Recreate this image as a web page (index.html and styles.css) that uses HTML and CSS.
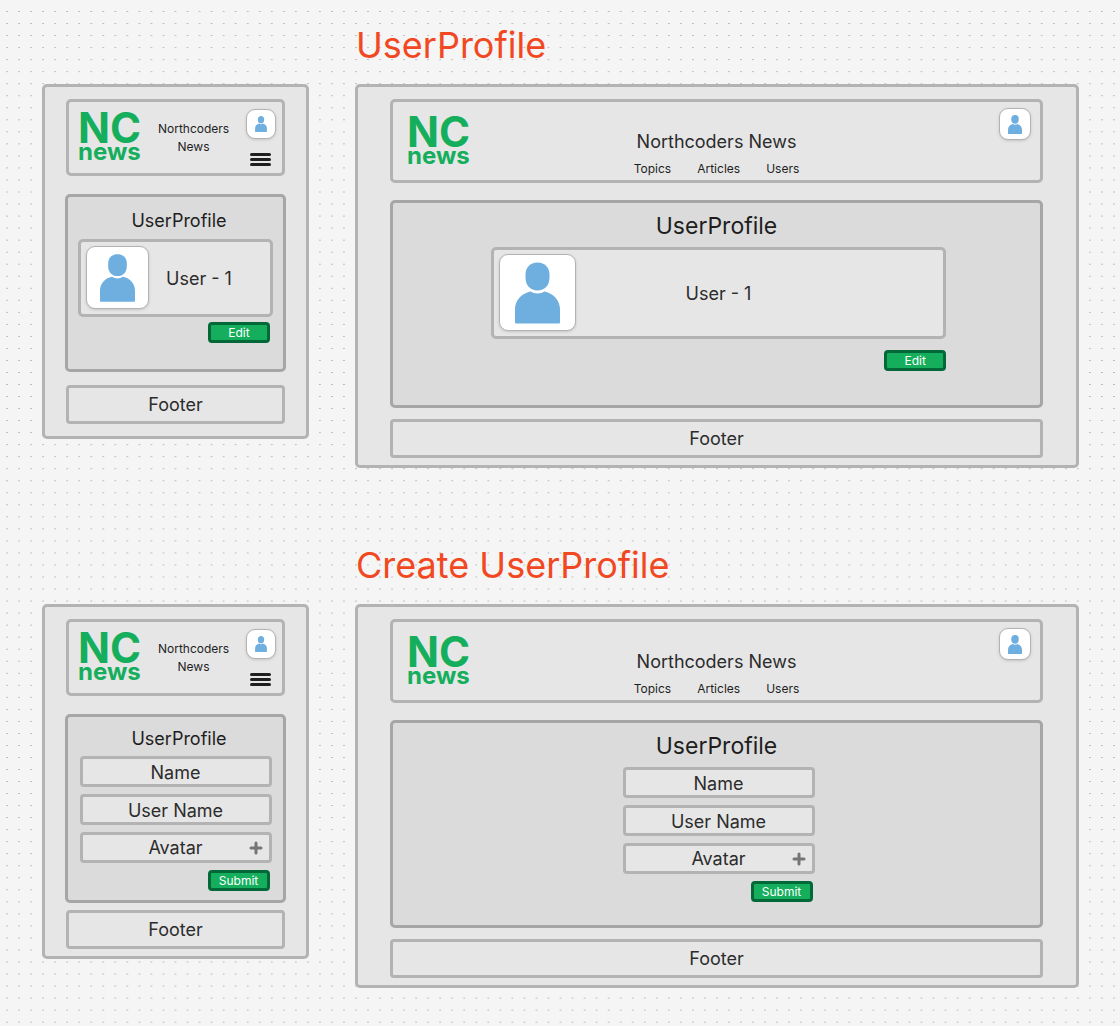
FILE: index.html
```html
<!DOCTYPE html>
<html lang="en">
<head>
<meta charset="utf-8">
<meta name="viewport" content="width=device-width, initial-scale=1">
<title>NC News wireframes</title>
<link rel="stylesheet" href="styles.css">
</head>
<body>
<svg class="defs" aria-hidden="true">
  <symbol id="person" viewBox="0 0 45 61">
    <path d="M22.500 0C30 0 34.500 5 34.500 12V15C34.500 23 29.500 28 22.500 28S10.500 23 10.500 15V12C10.500 5 15 0 22.500 0Z"/>
    <path d="M0 60V47C0 38 6 31 15.500 29Q18.500 31 22.500 31T29.500 29C39 31 45 38 45 47V60Q45 61 44 61H1Q0 61 0 60Z"/>
  </symbol>
</svg>

<main class="board">
  <section class="screens">
    <h2 class="screens-title">UserProfile</h2>

    <article class="frame mobile">
      <header class="bar">
        <div class="logo"><span class="logo-top">NC</span><span class="logo-bottom">news</span></div>
        <p class="site-name">Northcoders<br>News</p>
        <div class="actions">
          <span class="avatar"><svg aria-hidden="true"><use href="#person"/></svg></span>
          <button class="menu" type="button" aria-label="Menu"><span></span><span></span><span></span></button>
        </div>
      </header>
      <section class="panel view">
        <h3 class="panel-title">UserProfile</h3>
        <div class="panel-body">
          <div class="card">
            <span class="avatar large"><svg aria-hidden="true"><use href="#person"/></svg></span>
            <span class="user">User - 1</span>
          </div>
          <button class="action" type="button">Edit</button>
        </div>
      </section>
      <footer class="footer">Footer</footer>
    </article>

    <article class="frame desktop">
      <header class="bar">
        <div class="logo"><span class="logo-top">NC</span><span class="logo-bottom">news</span></div>
        <div class="masthead">
          <p class="site-name">Northcoders News</p>
          <nav class="nav"><a href="#topics">Topics</a><a href="#articles">Articles</a><a href="#users">Users</a></nav>
        </div>
        <span class="avatar"><svg aria-hidden="true"><use href="#person"/></svg></span>
      </header>
      <section class="panel view">
        <h3 class="panel-title">UserProfile</h3>
        <div class="panel-body">
          <div class="card">
            <span class="avatar large"><svg aria-hidden="true"><use href="#person"/></svg></span>
            <span class="user">User - 1</span>
          </div>
          <button class="action" type="button">Edit</button>
        </div>
      </section>
      <footer class="footer">Footer</footer>
    </article>
  </section>

  <section class="screens">
    <h2 class="screens-title">Create UserProfile</h2>

    <article class="frame mobile compact">
      <header class="bar">
        <div class="logo"><span class="logo-top">NC</span><span class="logo-bottom">news</span></div>
        <p class="site-name">Northcoders<br>News</p>
        <div class="actions">
          <span class="avatar"><svg aria-hidden="true"><use href="#person"/></svg></span>
          <button class="menu" type="button" aria-label="Menu"><span></span><span></span><span></span></button>
        </div>
      </header>
      <section class="panel create">
        <h3 class="panel-title">UserProfile</h3>
        <form class="panel-body form">
          <input class="field" type="text" placeholder="Name" aria-label="Name">
          <input class="field" type="text" placeholder="User Name" aria-label="User Name">
          <button class="field upload" type="button"><span>Avatar</span><svg viewBox="0 0 14 14" aria-hidden="true"><path d="M7 2V12M2 7H12"/></svg></button>
          <button class="action" type="submit">Submit</button>
        </form>
      </section>
      <footer class="footer">Footer</footer>
    </article>

    <article class="frame desktop">
      <header class="bar">
        <div class="logo"><span class="logo-top">NC</span><span class="logo-bottom">news</span></div>
        <div class="masthead">
          <p class="site-name">Northcoders News</p>
          <nav class="nav"><a href="#topics">Topics</a><a href="#articles">Articles</a><a href="#users">Users</a></nav>
        </div>
        <span class="avatar"><svg aria-hidden="true"><use href="#person"/></svg></span>
      </header>
      <section class="panel create">
        <h3 class="panel-title">UserProfile</h3>
        <form class="panel-body form">
          <input class="field" type="text" placeholder="Name" aria-label="Name">
          <input class="field" type="text" placeholder="User Name" aria-label="User Name">
          <button class="field upload" type="button"><span>Avatar</span><svg viewBox="0 0 14 14" aria-hidden="true"><path d="M7 2V12M2 7H12"/></svg></button>
          <button class="action" type="submit">Submit</button>
        </form>
      </section>
      <footer class="footer">Footer</footer>
    </article>
  </section>
</main>
</body>
</html>
```

FILE: styles.css
```css
* { box-sizing: border-box; }

/* dotted canvas */
body {
  margin: 0;
  font-family: Inter, "Liberation Sans", sans-serif;
  color: #2c2c2c;
  background-color: #f5f5f5;
  background-image: conic-gradient(from 90deg at calc(100% - 2px) calc(100% - 1px), #b8b8b8 90deg, transparent 0);
  background-size: calc(100vw / 93) calc(100vw / 93);
  background-position: 8px 12px;
}

h2, h3, p { margin: 0; font-weight: 400; }

button, input { font: inherit; color: inherit; margin: 0; }

.defs { display: none; }

.board {
  display: flex;
  flex-direction: column;
  gap: 72px;
  padding: 20px 41px 38px 42px;
}

.screens {
  display: grid;
  grid-template-columns: minmax(267px, 267fr) 724fr;
  column-gap: 46px;
  row-gap: 14px;
  align-items: start;
}

.screens-title {
  grid-column: 2;
  padding-left: 1px;
  font-size: 36px;
  line-height: 50px;
  color: #f24822;
}

.frame, .bar, .card, .footer, .field {
  border: 3px solid #b3b3b3;
  border-radius: 5px;
  background: #e6e6e6;
}

.frame { display: flex; flex-direction: column; }
.mobile { padding: 12px 21px; }
.compact { padding-bottom: 7px; }
.desktop { padding: 12px 33px 7px 32px; }

/* site header */
.mobile .bar {
  display: flex;
  align-items: center;
  min-height: 77px;
  padding: 0 6px 0 9px;
}

.desktop .bar {
  display: grid;
  grid-template-columns: 1fr auto 1fr;
  min-height: 84px;
  padding: 6px 9px 3px;
}

.logo {
  display: flex;
  flex-direction: column;
  padding-bottom: 5px;
  font-weight: 700;
  color: #14ae5c;
}
.desktop .logo { padding: 7px 0 0 5px; }
.logo-top { font-size: 42px; line-height: 34px; }
.logo-bottom { font-size: 24px; line-height: 14px; }

.mobile .site-name {
  flex: 1;
  text-align: center;
  font-size: 12px;
  line-height: 18px;
  color: #1e1e1e;
}

.masthead {
  display: flex;
  flex-direction: column;
  align-items: center;
  justify-content: flex-end;
  gap: 7px;
}
.desktop .site-name { font-size: 18px; line-height: 24px; }

.nav { display: flex; gap: 26px; font-size: 12px; line-height: 16px; }
.nav a { color: #1e1e1e; text-decoration: none; }

.actions {
  display: flex;
  flex-direction: column;
  align-items: center;
  gap: 14px;
}

.avatar {
  display: flex;
  justify-content: center;
  align-items: flex-start;
  width: 30px;
  height: 30px;
  padding-top: 6px;
  border: 1px solid #b3b3b3;
  border-radius: 9px;
  background: #fff;
  box-shadow: 0 1px 3px rgba(0, 0, 0, 0.15);
}
.avatar svg { width: 12px; height: 16px; fill: #6eafe0; }

.desktop .avatar { width: 32px; height: 32px; justify-self: end; }
.desktop .avatar svg { width: 14px; height: 19px; }

.avatar.large { flex: none; padding-top: 7px; }
.mobile .avatar.large { width: 63px; height: 63px; }
.mobile .avatar.large svg { width: 35px; height: 48px; }
.desktop .avatar.large { width: 77px; height: 77px; justify-self: start; }
.desktop .avatar.large svg { width: 45px; height: 62px; }

.menu {
  display: flex;
  flex-direction: column;
  gap: 2px;
  width: 21px;
  margin-right: 2px;
  padding: 0;
  border: 0;
  background: none;
}
.menu span { height: 3px; border-radius: 2px; background: #1e1e1e; }

/* main panel */
.panel {
  border: 3px solid #a6a6a6;
  border-radius: 5px;
  background: #dbdbdb;
  color: #1e1e1e;
}
.mobile .panel { margin: 18px -1px 0; }
.mobile .view { min-height: 178px; margin-bottom: 13px; padding: 12px 10px; }
.mobile .create { min-height: 189px; margin-bottom: 7px; padding: 10px 10px 7px; }
.desktop .panel { min-height: 208px; margin: 17px 0 11px; padding: 8px 0; }

.panel-title { text-align: center; }
.mobile .panel-title { padding-left: 7px; font-size: 18px; line-height: 24px; }
.desktop .panel-title { font-size: 23px; line-height: 30px; }

.panel-body {
  display: flex;
  flex-direction: column;
  align-items: flex-end;
  margin: 0 auto;
  color: #2c2c2c;
}
.mobile .panel-body { padding-top: 6px; gap: 5px; }
.desktop .panel-body { gap: 11px; width: 71%; padding: 6px 0 0 4px; }
.mobile .action { margin-right: 3px; }

.card { align-self: stretch; font-size: 18px; line-height: 24px; }
.mobile .card {
  display: flex;
  align-items: center;
  min-height: 78px;
  padding: 0 5px 1px;
  gap: 17px;
}
.desktop .card {
  display: grid;
  grid-template-columns: 1fr auto 1fr;
  align-items: center;
  min-height: 92px;
  padding: 0 5px 1px;
}
.user { padding-top: 2px; }

.action {
  width: 62px;
  height: 21px;
  padding: 0;
  border: 3px solid #036838;
  border-radius: 4px;
  background: #14ae5c;
  color: #fff;
  font-size: 12px;
  line-height: 15px;
  text-align: center;
}

/* create form */
.mobile .form, .desktop .form { gap: 7px; }
.mobile .form { width: 192px; }
.desktop .form { width: 196px; }
.form .action, .mobile .form .action { margin-right: 2px; }
.mobile .form { padding-top: 5px; }

.field {
  width: 100%;
  height: 31px;
  padding: 1px 0 0;
  border-radius: 4px;
  font-size: 18px;
  line-height: 24px;
  text-align: center;
}
.field::placeholder { color: #2c2c2c; opacity: 1; }

.upload {
  display: grid;
  grid-template-columns: 1fr auto 1fr;
  align-items: center;
}
.upload span { grid-column: 2; }
.upload svg {
  justify-self: end;
  width: 14px;
  height: 14px;
  margin-right: 6px;
  fill: none;
  stroke: #757575;
  stroke-width: 3;
  stroke-linecap: round;
}

.footer {
  min-height: 39px;
  border-radius: 4px;
  font-size: 18px;
  line-height: 33px;
  text-align: center;
}
```
